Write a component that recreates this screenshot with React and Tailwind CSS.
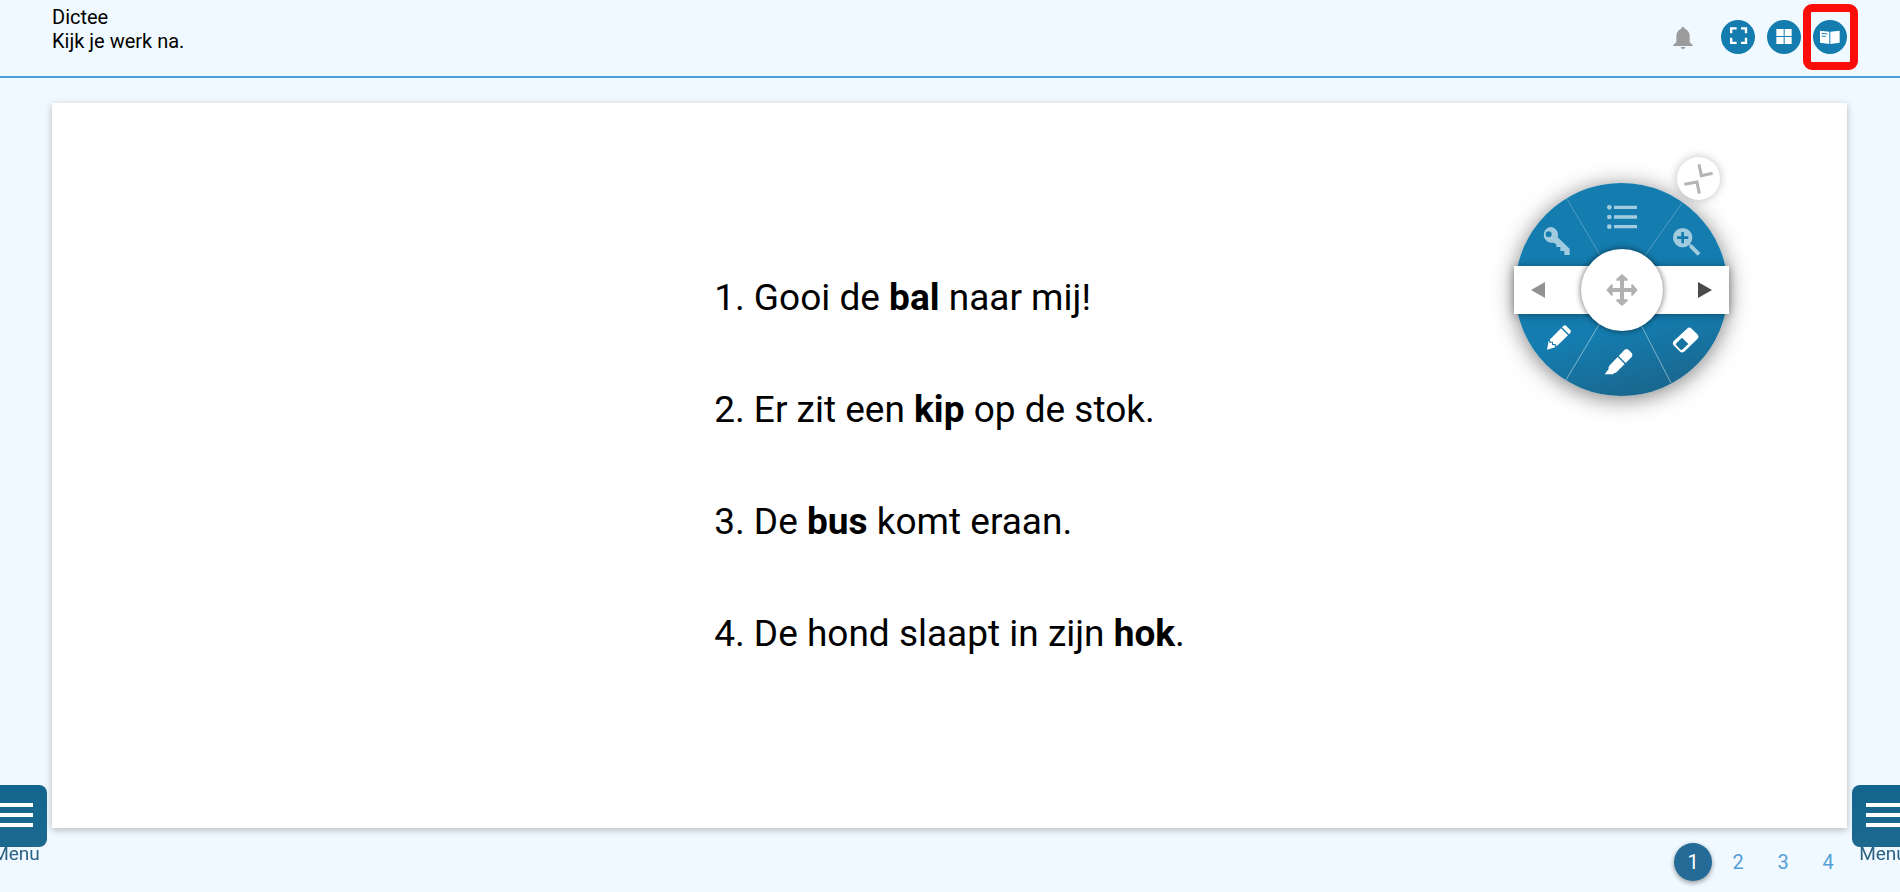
import React, { useState } from "react";

const SENTENCES = [
  { before: "Gooi de ", word: "bal", after: " naar mij!" },
  { before: "Er zit een ", word: "kip", after: " op de stok." },
  { before: "De ", word: "bus", after: " komt eraan." },
  { before: "De hond slaapt in zijn ", word: "hok", after: "." },
];

const PAGES = [1, 2, 3, 4];

const BellIcon = () => (
  <svg viewBox="0 0 60 66" className="h-[22px] w-5" fill="#9b9b9b">
    <path d="M30 0c3 0 5 2 5 5 9 3 15 11 15 21v20l9 8v3H1v-3l9-8V26C10 16 16 8 25 5c0-3 2-5 5-5z" />
    <path d="M23 60h14c-1 4-3 6-7 6s-6-2-7-6z" />
  </svg>
);

const FullscreenIcon = () => (
  <svg viewBox="0 0 102 102" className="h-full w-full" fill="none" stroke="white" strokeWidth="7">
    <path d="M30.500 40V25H47M60 25h15v15M75 53v15.500H60M47 68.500H30.500V53" />
  </svg>
);

const GridIcon = () => (
  <svg viewBox="0 0 102 102" className="h-full w-full" fill="white">
    <path d="M28 27h22v21H28zM53 27h21v21H53zM28 51h22v21H28zM53 51h21v21H53z" />
  </svg>
);

const BookIcon = () => (
  <svg viewBox="0 0 102 102" className="h-full w-full">
    <path d="M21 32l28 3v37l-28-4zM52 35l28-3v36l-28 4z" fill="white" />
    <path d="M26 40l17 2M26 48l12 1.500" stroke="#147cae" strokeWidth="3" />
  </svg>
);

const ListIcon = () => (
  <svg viewBox="0 0 90 90" className="h-[30px] w-[30px]" fill="#a1cbdf">
    <circle cx="7" cy="16" r="7" />
    <circle cx="7" cy="45" r="7" />
    <circle cx="7" cy="74" r="7" />
    <path d="M21 11h69v10H21zM21 40h69v10H21zM21 69h69v10H21z" />
  </svg>
);

const KeyIcon = () => (
  <svg viewBox="0 0 90 90" className="h-[30px] w-[30px]" fill="#a1cbdf">
    <path
      fillRule="evenodd"
      d="M27 3a24 24 0 0 1 23 31L86 68v19H70V75H58V63H46V55l-9-5A24 24 0 1 1 27 3zM23 16a9 9 0 1 0 0 18 9 9 0 0 0 0-18z"
    />
  </svg>
);

const ZoomIcon = () => (
  <svg viewBox="0 0 90 90" className="h-[30px] w-[30px]">
    <circle cx="32" cy="32" r="29" fill="#a1cbdf" />
    <path d="M32 15v34M15 32h34" stroke="#147cae" strokeWidth="8" />
    <path d="M50 50l7 7" stroke="#a1cbdf" strokeWidth="5" />
    <path d="M55 56l26 26" stroke="#a1cbdf" strokeWidth="12" />
  </svg>
);

const PencilIcon = () => (
  <svg viewBox="0 0 90 90" className="h-[30px] w-[30px]" fill="white">
    <path d="M58 12q5-4 9 0l12 12q4 5 0 9l-4 4-21-21z" />
    <path d="M51 19l21 21-34 33-4-7-7 0 0-7-7 0-3-6z" />
    <path d="M14 56l3 6 7 0 0 7 7 0 3 7-25 7z" />
  </svg>
);

const MarkerIcon = () => (
  <svg viewBox="0 0 90 90" className="h-[30px] w-[30px]" fill="white">
    <path d="M62 8q6-5 12 1l9 9q5 6 0 12L65 48 44 27z" />
    <path d="M41 30l21 21-23 23q-3 4-8 4l-4 4H2l12-16q-2-5 2-10z" />
  </svg>
);

const EraserIcon = () => (
  <svg viewBox="0 0 90 90" className="h-[30px] w-[30px]">
    <path
      fillRule="evenodd"
      fill="white"
      d="M48 11q7-7 14 0l17 17q7 7 0 14L41 79q-8 7-15 0L9 62q-7-7 0-15zM33 38L16 55q-3 3 0 6l11 12q4 4 8 0l17-16z"
    />
  </svg>
);

const MoveIcon = () => (
  <svg viewBox="0 0 96 96" className="h-8 w-8" fill="#b1b1b1">
    <path d="M48 0l17 15v5H54v22h22V31h4l15 17-15 17h-4V54H54v22h11v5L48 96 31 81v-5h11V54H20v11h-4L1 48l15-17h4v11h22V20H31v-5z" />
  </svg>
);

const CollapseIcon = () => (
  <svg viewBox="0 0 129 129" className="h-full w-full" fill="none" stroke="#b4b4b4" strokeWidth="9">
    <path d="M66 22l7 34 34-7M22 82l38-7 7 35" />
  </svg>
);

const RoundButton = ({ label, children }) => (
  <button aria-label={label} className="h-[34px] w-[34px] rounded-full bg-[#147cae]">
    {children}
  </button>
);

// Button on the tool wheel, placed by the given classes
const WheelButton = ({ label, className, children }) => (
  <button aria-label={label} className={`absolute flex items-center justify-center ${className}`}>
    {children}
  </button>
);

const ToolWheel = () => (
  <div className="absolute right-[118px] top-[54px] h-[240px] w-[215px]">
    {/* Disc with the sector lines */}
    <div className="absolute left-px top-[26px] h-[213px] w-[213px] rounded-full bg-linear-165 from-[#147cae] from-65% to-[#1a6084] shadow-[0_3px_22px_rgba(0,0,0,0.5)]">
      <svg viewBox="0 0 213 213" className="h-full w-full" stroke="white">
        <path d="M52 16l33 56M167 20l-38 54" strokeOpacity="0.25" />
        <path d="M51 197l34-57M156 200l-30-58" strokeOpacity="0.45" />
      </svg>
    </div>

    {/* Previous / next bar */}
    <div className="absolute left-0 top-[109px] flex h-12 w-full items-center justify-between bg-white px-[17px] shadow-[0_1px_8px_rgba(0,0,0,0.35)]">
      <button aria-label="Vorige">
        <svg viewBox="0 0 14 16" className="h-4 w-3.5" fill="#919191">
          <path d="M0 8L14 0v16z" />
        </svg>
      </button>
      <button aria-label="Volgende">
        <svg viewBox="0 0 14 16" className="h-4 w-3.5" fill="#4a4a4a">
          <path d="M14 8L0 0v16z" />
        </svg>
      </button>
    </div>

    <WheelButton label="Antwoorden" className="left-[27px] top-[69px]">
      <KeyIcon />
    </WheelButton>
    <WheelButton label="Lijst" className="left-[93px] top-[45px]">
      <ListIcon />
    </WheelButton>
    <WheelButton label="Inzoomen" className="left-[158px] top-[70px]">
      <ZoomIcon />
    </WheelButton>
    <WheelButton label="Potlood" className="left-[30px] top-[165px]">
      <PencilIcon />
    </WheelButton>
    <WheelButton label="Markeerstift" className="left-[90px] top-[190px]">
      <MarkerIcon />
    </WheelButton>
    <WheelButton label="Gum" className="left-[157px] top-[168px]">
      <EraserIcon />
    </WheelButton>
    <WheelButton
      label="Verplaatsen"
      className="left-[67px] top-[92px] h-[82px] w-[82px] rounded-full bg-white shadow-[0_0_6px_rgba(0,0,0,0.6)]"
    >
      <MoveIcon />
    </WheelButton>
    <WheelButton
      label="Inklappen"
      className="left-[163px] top-0 h-[43px] w-[43px] rounded-full bg-white shadow-[0_0_10px_rgba(0,0,0,0.25)]"
    >
      <CollapseIcon />
    </WheelButton>
  </div>
);

const MenuButton = ({ className }) => (
  <button className={`fixed bottom-[31px] flex w-[62px] flex-col items-center ${className}`}>
    <span className="flex h-[62px] w-full flex-col items-center justify-center gap-1.5 rounded-lg bg-linear-to-b from-[#12658e] to-[#1c698f] pb-0.5">
      <span className="h-1 w-[34px] bg-white" />
      <span className="h-1 w-[34px] bg-white" />
      <span className="h-1 w-[34px] bg-white" />
    </span>
    <span className="text-[19px] leading-[14px] text-[#2c6284]">Menu</span>
  </button>
);

const App = () => {
  const [page, setPage] = useState(1);

  return (
    <div className="flex min-h-screen flex-col bg-[#f0f9ff] font-[Roboto,sans-serif] text-black">
      <header className="flex h-[78px] justify-between border-b-2 border-[#4aa2d8] px-[52px]">
        <div className="pt-[5px] text-[20px] leading-6">
          <h1>Dictee</h1>
          <p>Kijk je werk na.</p>
        </div>
        <div className="flex items-start gap-3 pr-px pt-5">
          <button aria-label="Meldingen" className="mr-4 pt-[7px]">
            <BellIcon />
          </button>
          <RoundButton label="Volledig scherm">
            <FullscreenIcon />
          </RoundButton>
          <RoundButton label="Overzicht">
            <GridIcon />
          </RoundButton>
          <div className="relative flex">
            <RoundButton label="Boek">
              <BookIcon />
            </RoundButton>
            <div className="pointer-events-none absolute -left-2.5 -top-4 h-[66px] w-[55px] rounded-[9px] border-8 border-[#fb0d0a]" />
          </div>
        </div>
      </header>

      <main className="relative ml-[52px] mr-[53px] mt-[25px] flex flex-1 items-center justify-center bg-white shadow-[0_2px_7px_rgba(0,0,0,0.25)]">
        <ol className="text-[37px] leading-[112px]">
          {SENTENCES.map((sentence, index) => (
            <li key={sentence.word}>
              {index + 1}. {sentence.before}
              <b>{sentence.word}</b>
              {sentence.after}
            </li>
          ))}
        </ol>
        <ToolWheel />
      </main>

      <nav className="flex justify-end gap-[7px] pb-[11px] pr-[53px] pt-[15px]">
        {PAGES.map((number) => (
          <button
            key={number}
            onClick={() => setPage(number)}
            className={`h-[38px] w-[38px] rounded-full text-[20px] ${
              number === page
                ? "bg-[#246b97] text-white shadow-[0_2px_5px_rgba(0,0,0,0.4)]"
                : "text-[#559fd6]"
            }`}
          >
            {number}
          </button>
        ))}
      </nav>

      <MenuButton className="-left-[15px]" />
      <MenuButton className="-right-3.5" />
    </div>
  );
};

export default App;
